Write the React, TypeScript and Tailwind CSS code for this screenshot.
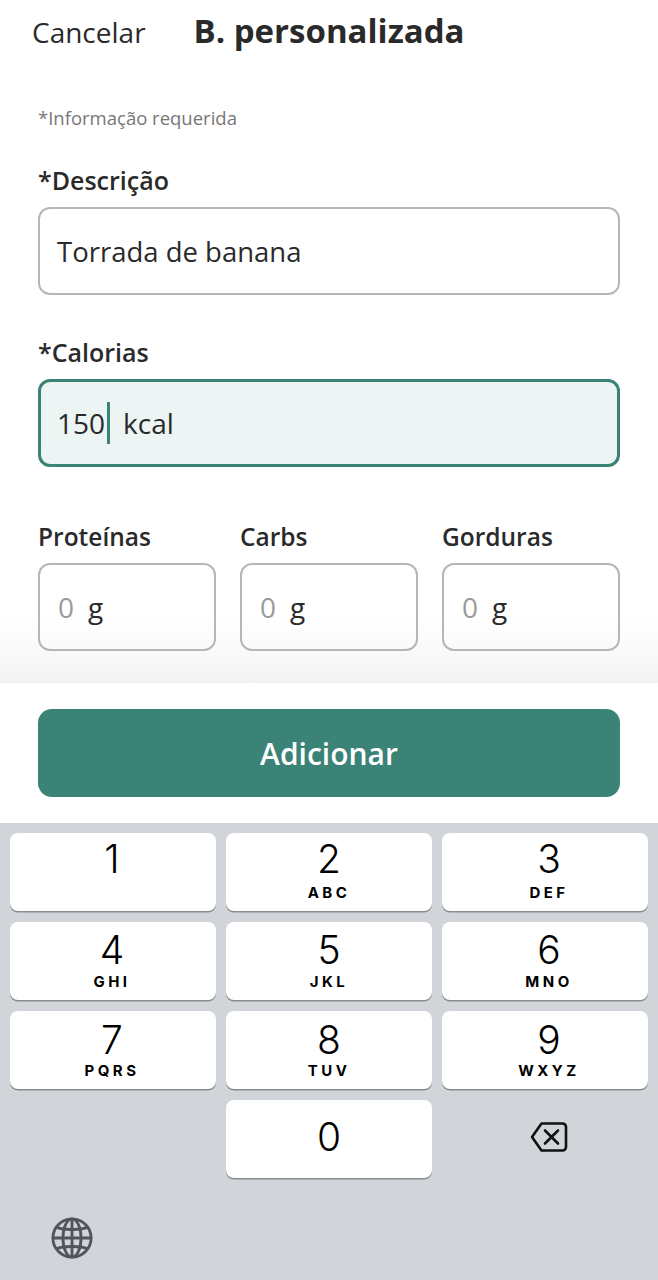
const FONT = "font-['Open_Sans','Liberation_Sans',sans-serif]";
const KEY_FONT = "font-['Inter','Liberation_Sans',sans-serif]";

const KEYS = [
  { n: '1', l: '', cls: 'pr-[2px]', digit: 'mt-[3px]', letters: 'mt-[3px]' },
  { n: '2', l: 'ABC', cls: '', digit: 'mt-[3px]', letters: 'mt-[3px]' },
  { n: '3', l: 'DEF', cls: 'pl-[8px]', digit: 'mt-[3px]', letters: 'mt-[3px]' },
  { n: '4', l: 'GHI', cls: 'pr-[2px]', digit: 'mt-[5px]', letters: 'mt-[1px]' },
  { n: '5', l: 'JKL', cls: '', digit: 'mt-[5px]', letters: 'mt-[1px]' },
  { n: '6', l: 'MNO', cls: 'pl-[8px]', digit: 'mt-[5px]', letters: 'mt-[1px]' },
  { n: '7', l: 'PQRS', cls: 'pr-[2px]', digit: 'mt-[6px]', letters: 'mt-0' },
  { n: '8', l: 'TUV', cls: '', digit: 'mt-[6px]', letters: 'mt-0' },
  { n: '9', l: 'WXYZ', cls: 'pl-[8px]', digit: 'mt-[6px]', letters: 'mt-0' },
];

type KeyProps = { n: string; l: string; cls: string; digit: string; letters: string };

const Key = ({ n, l, cls, digit, letters }: KeyProps) => (
  <div className={`h-[78px] rounded-[8px] bg-white shadow-[0_1.5px_0_#8a8b8f] flex flex-col items-center ${cls}`}>
    <span className={`h-[45px] text-[39px] leading-[45px] font-[350] text-black ${digit}`}>{n}</span>
    <span className={`text-[15px] leading-[18px] font-bold tracking-[3.5px] text-black ${letters}`}>{l}</span>
  </div>
);

const MacroField = ({ label }: { label: string }) => (
  <div>
    <p className="text-[24.5px] leading-[30px] font-semibold text-[#2a2a2a]">{label}</p>
    <div className="mt-[11px] h-[88px] rounded-[12px] border-2 border-[#b6b6b6] pl-[18px] flex items-center text-[28px]">
      <span className="text-[#9a9a9a]">0</span>
      <span className="ml-[14px] text-[#2a2a2a]">g</span>
    </div>
  </div>
);

export default function App() {
  return (
    <div className={`w-[658px] h-[1280px] flex flex-col bg-white overflow-hidden ${FONT}`}>
      {/* Form */}
      <div className="h-[683px] bg-[linear-gradient(to_bottom,#ffffff_90%,#fafafa_95%,#f2f2f2_100%)]">
        <div className="flex items-baseline pl-[32px] pt-[9px]">
          <span className="text-[28px] leading-[44px] text-[#2a2a2a]">Cancelar</span>
          <span className="ml-[48px] text-[33px] leading-[44px] font-bold text-[#2a2a2a]">B. personalizada</span>
        </div>

        <div className="px-[38px]">
          <p className="mt-[50px] text-[18.5px] leading-[28px] text-[#777777]">*Informação requerida</p>

          <p className="mt-[33px] text-[25px] leading-[30px] font-semibold text-[#2a2a2a]">*Descrição</p>
          <div className="mt-[12px] h-[88px] rounded-[12px] border-2 border-[#b6b6b6] pl-[17px] pt-[2px] flex items-center text-[27.5px] text-[#2a2a2a]">
            Torrada de banana
          </div>

          <p className="mt-[42px] text-[25px] leading-[30px] font-semibold text-[#2a2a2a]">*Calorias</p>
          <div className="mt-[12px] h-[88px] rounded-[12px] border-[3px] border-[#3b8277] bg-[#ecf5f4] pl-[16px] flex items-center text-[28px] text-[#2a2a2a]">
            <span>150</span>
            <span className="ml-[2px] w-[3px] h-[42px] bg-[#3b8277]" />
            <span className="ml-[13px]">kcal</span>
          </div>

          <div className="mt-[55px] grid grid-cols-3 gap-[24px]">
            <MacroField label="Proteínas" />
            <MacroField label="Carbs" />
            <MacroField label="Gorduras" />
          </div>
        </div>
      </div>

      {/* Action */}
      <div className="h-[140px] px-[38px] pt-[26px]">
        <button className="w-full h-[88px] rounded-[14px] bg-[#3b8277] text-white text-[30px] font-semibold">
          Adicionar
        </button>
      </div>

      {/* Keypad */}
      <div className={`flex-1 bg-[#d1d4d9] px-[10px] pt-[10px] ${KEY_FONT}`}>
        <div className="grid grid-cols-3 gap-x-[10px] gap-y-[11px]">
          {KEYS.map((k) => (
            <Key key={k.n} {...k} />
          ))}
          <div />
          <div className="h-[78px] rounded-[8px] bg-white shadow-[0_1.5px_0_#8a8b8f] flex items-center justify-center pb-[4px] text-[39px] font-[350] text-black">
            0
          </div>
          <div className="flex items-center justify-center pl-[8px] pb-[4px]">
            <svg width="38" height="32" viewBox="0 0 38 32" fill="none" stroke="#111111" strokeWidth="2.6" strokeLinecap="round" strokeLinejoin="round">
              <path d="M11.5 2.5H32.5a3.5 3.5 0 0 1 3.5 3.5V26a3.5 3.5 0 0 1-3.5 3.5H11.5L2 16z" />
              <path d="M15 9.5l13 13M28 9.5l-13 13" />
            </svg>
          </div>
        </div>
        <div className="mt-[39px] ml-[41px]">
          <svg width="42" height="42" viewBox="0 0 44 44" fill="none" stroke="#50555c" strokeWidth="3">
            <circle cx="22" cy="22" r="20" />
            <ellipse cx="22" cy="22" rx="9.5" ry="20" />
            <path d="M22 2V42M2 22H42" />
            <path d="M6 10.5C11 14 33 14 38 10.5M6 33.5C11 30 33 30 38 33.5" />
          </svg>
        </div>
      </div>
    </div>
  );
}
